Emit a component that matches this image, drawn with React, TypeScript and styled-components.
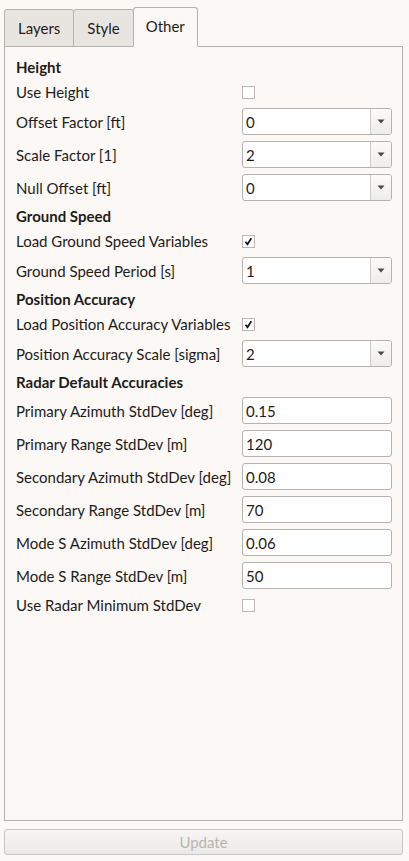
import React from 'react'
import styled, { createGlobalStyle } from 'styled-components'

const GlobalStyle = createGlobalStyle`
  html, body {
    margin: 0;
    padding: 0;
    background: #fbf8f5;
  }
  body {
    font-family: Lato, 'Noto Sans', sans-serif;
    font-size: 15px;
    color: #1e1c1a;
  }
`

const Page = styled.div`
  width: 409px;
  height: 861px;
  box-sizing: border-box;
  padding: 7px 6px 0 4px;
  display: flex;
  flex-direction: column;
`

const TabBar = styled.div`
  display: flex;
  align-items: flex-end;
  padding-left: 1px;
  height: 40px;
  margin-bottom: -1px;
  position: relative;
  z-index: 1;
`

const Tab = styled.div<{ $active?: boolean }>`
  box-sizing: border-box;
  height: ${p => (p.$active ? '40px' : '38px')};
  padding: 0 ${p => (p.$active ? '12px' : '13px')};
  padding-bottom: ${p => (p.$active ? '3px' : '0')};
  display: flex;
  align-items: center;
  border: 1px solid #b6b2ae;
  border-bottom: ${p => (p.$active ? '1px solid #fbf8f5' : '1px solid #b6b2ae')};
  border-radius: 3px 3px 0 0;
  background: ${p => (p.$active ? '#fbf8f5' : '#e8e5e1')};
  margin-left: -1px;
`

const Panel = styled.div`
  box-sizing: border-box;
  height: 775px;
  border: 1px solid #b6b2ae;
  background: #fbf8f5;
  padding: 11px 10px 0 11px;
`

const Form = styled.div`
  display: grid;
  grid-template-columns: 226px 150px;
  row-gap: 6px;
  align-items: center;
`

const Heading = styled.div`
  grid-column: 1 / span 2;
  font-weight: 700;
  height: 18px;
  line-height: 18px;
`

const Label = styled.div`
  height: 20px;
  line-height: 20px;
  white-space: nowrap;
`

const Box = styled.div<{ $h: number }>`
  box-sizing: border-box;
  height: ${p => p.$h}px;
  border: 1px solid #b6b2ae;
  border-radius: 3px;
  background: #ffffff;
  display: flex;
  align-items: center;
  overflow: hidden;
`

const Value = styled.span`
  flex: 1;
  padding-left: 3px;
`

const ArrowPart = styled.div`
  width: 20px;
  align-self: stretch;
  border-left: 1px solid #cfcbc7;
  background: linear-gradient(#fbfaf9, #efedea);
  display: flex;
  align-items: center;
  justify-content: center;
`

const CheckCell = styled.div`
  height: 20px;
  display: flex;
  align-items: center;
`

const Check = styled.div`
  box-sizing: border-box;
  width: 13px;
  height: 13px;
  border: 1px solid #bcb8b4;
  background: #ffffff;
  display: flex;
  align-items: center;
  justify-content: center;
`

const Footer = styled.div`
  padding-top: 8px;
`

const UpdateButton = styled.div`
  box-sizing: border-box;
  height: 26px;
  border: 1px solid #c9c5c1;
  border-radius: 3px;
  background: linear-gradient(#f8f6f4, #ebe9e6);
  color: #b9b5b1;
  display: flex;
  align-items: center;
  justify-content: center;
`

const Combo = ({ value }: { value: string }) => (
  <Box $h={27}>
    <Value>{value}</Value>
    <ArrowPart>
      <svg width="8" height="5" viewBox="0 0 8 5">
        <path d="M0.5 0.5 L7.5 0.5 L4 4.5 Z" fill="#4a4846" />
      </svg>
    </ArrowPart>
  </Box>
)

const Input = ({ value }: { value: string }) => (
  <Box $h={27}>
    <Value>{value}</Value>
  </Box>
)

const CheckBox = ({ checked }: { checked?: boolean }) => (
  <CheckCell>
    <Check>
      {checked && (
        <svg width="9" height="9" viewBox="0 0 9 9">
          <path d="M1.5 4.8 L3.5 7.3 L7.3 1.2" fill="none" stroke="#111" strokeWidth="1.7" />
        </svg>
      )}
    </Check>
  </CheckCell>
)

const radar = [
  ['Primary Azimuth StdDev [deg]', '0.15'],
  ['Primary Range StdDev [m]', '120'],
  ['Secondary Azimuth StdDev [deg]', '0.08'],
  ['Secondary Range StdDev [m]', '70'],
  ['Mode S Azimuth StdDev [deg]', '0.06'],
  ['Mode S Range StdDev [m]', '50'],
]

export default function App() {
  return (
    <>
      <GlobalStyle />
      <Page>
        <TabBar>
          <Tab>Layers</Tab>
          <Tab>Style</Tab>
          <Tab $active>Other</Tab>
        </TabBar>
        <Panel>
          <Form>
            <Heading>Height</Heading>
            <Label>Use Height</Label>
            <CheckBox />
            <Label>Offset Factor [ft]</Label>
            <Combo value="0" />
            <Label>Scale Factor [1]</Label>
            <Combo value="2" />
            <Label>Null Offset [ft]</Label>
            <Combo value="0" />

            <Heading>Ground Speed</Heading>
            <Label>Load Ground Speed Variables</Label>
            <CheckBox checked />
            <Label>Ground Speed Period [s]</Label>
            <Combo value="1" />

            <Heading>Position Accuracy</Heading>
            <Label>Load Position Accuracy Variables</Label>
            <CheckBox checked />
            <Label>Position Accuracy Scale [sigma]</Label>
            <Combo value="2" />

            <Heading>Radar Default Accuracies</Heading>
            {radar.map(([label, value]) => (
              <React.Fragment key={label}>
                <Label>{label}</Label>
                <Input value={value} />
              </React.Fragment>
            ))}
            <Label>Use Radar Minimum StdDev</Label>
            <CheckBox />
          </Form>
        </Panel>
        <Footer>
          <UpdateButton>Update</UpdateButton>
        </Footer>
      </Page>
    </>
  )
}
